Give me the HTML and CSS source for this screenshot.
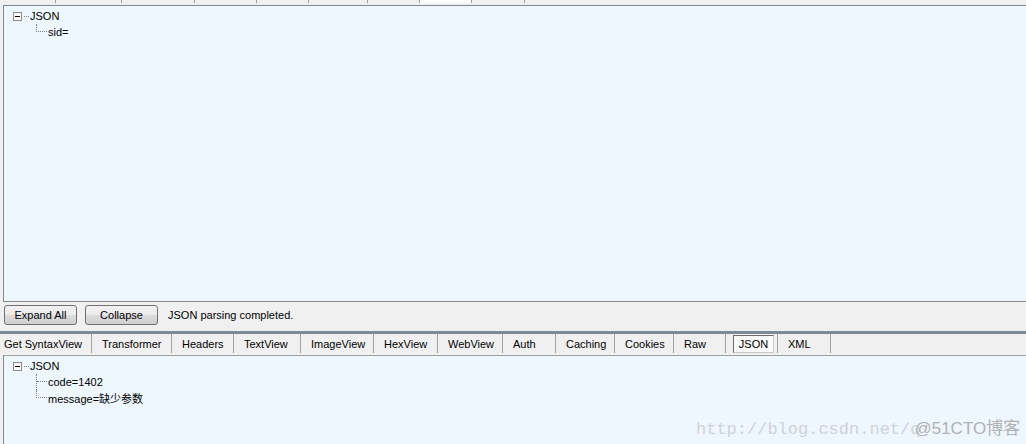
FILE: index.html
```html
<!DOCTYPE html>
<html>
<head>
<meta charset="utf-8">
<link rel="stylesheet" href="styles.css">
</head>
<body>
<div class="topstrip">
  <span class="tick" style="width:56px"></span>
  <span class="tick" style="width:66px"></span>
  <span class="tick" style="width:73px"></span>
  <span class="tick" style="width:62px"></span>
  <span class="tick" style="width:52px"></span>
  <span class="tick" style="width:59px"></span>
  <span class="tick" style="width:52px"></span>
  <span class="tick sel" style="width:52px"></span>
  <span class="tick" style="width:53px"></span>
</div>
<div class="panel top">
  <div class="tree">
    <div class="row root"><span class="box"></span><span class="hdots"></span><span class="label">JSON</span></div>
    <div class="children">
      <div class="row child last"><span class="elbow"></span><span class="label">sid=</span></div>
    </div>
  </div>
</div>
<div class="toolbar">
  <button class="btn btn-expand">Expand All</button>
  <button class="btn btn-collapse">Collapse</button>
  <span class="status">JSON parsing completed.</span>
</div>
<div class="divider"></div>
<div class="tabs">
  <div class="tab first" style="width:92px">Get SyntaxView</div>
  <div class="tab" style="width:80px">Transformer</div>
  <div class="tab" style="width:62px">Headers</div>
  <div class="tab" style="width:67px">TextView</div>
  <div class="tab" style="width:73px">ImageView</div>
  <div class="tab" style="width:64px">HexView</div>
  <div class="tab" style="width:65px">WebView</div>
  <div class="tab" style="width:53px">Auth</div>
  <div class="tab" style="width:59px">Caching</div>
  <div class="tab" style="width:59px">Cookies</div>
  <div class="tab" style="width:52px">Raw</div>
  <div class="tab active" style="width:52px"><span class="activebox">JSON</span></div>
  <div class="tab" style="width:53px">XML</div>
</div>
<div class="panel bottom">
  <div class="tree">
    <div class="row root"><span class="box"></span><span class="hdots"></span><span class="label">JSON</span></div>
    <div class="children">
      <div class="row child"><span class="elbow"></span><span class="label">code=1402</span></div>
      <div class="row child last"><span class="elbow"></span><span class="label">message=缺少参数</span></div>
    </div>
  </div>
  <div class="watermark"><span class="wm-url">http://blog.csdn.net/q</span><span class="wm-brand">@51CTO博客</span></div>
</div>
</body>
</html>
```
FILE: styles.css
```css
html, body {
  margin: 0;
  padding: 0;
}
body {
  width: 1026px;
  height: 444px;
  overflow: hidden;
  background: #f0f0f0;
  font-family: "Liberation Sans", Arial, "Noto Sans CJK SC", sans-serif;
  font-size: 11px;
  color: #000;
  display: flex;
  flex-direction: column;
}
.topstrip {
  height: 5px;
  display: flex;
  background: #f0f0f0;
  flex: none;
}
.tick {
  height: 3px;
  border-right: 1px solid #a0a0a0;
  box-sizing: border-box;
}
.tick.sel {
  background: #fff;
}
.panel {
  margin-left: 3px;
  background: #eef6fe;
  border-left: 1px solid #828790;
  box-sizing: border-box;
  position: relative;
}
.panel.top {
  height: 297px;
  flex: none;
  border-top: 1px solid #828790;
  border-bottom: 1px solid #828790;
  padding-top: 2px;
}
.panel.bottom {
  flex: 1;
  border-top: 1px solid #a0a0a0;
  padding-top: 2px;
}
.tree {
  padding-left: 9px;
}
.row {
  height: 16px;
  display: flex;
  align-items: center;
  white-space: nowrap;
}
.box {
  width: 7px;
  height: 7px;
  border: 1px solid #8a8a8a;
  background: #fff;
  position: relative;
  flex: none;
}
.box::after {
  content: "";
  position: absolute;
  left: 1px;
  top: 3px;
  width: 5px;
  height: 1px;
  background: #000;
}
.hdots {
  width: 5px;
  margin-left: 2px;
  border-top: 1px dotted #808080;
  height: 0;
}
.row.root .label {
  margin-left: 1px;
}
.children {
  margin-left: 23px;
}
.row.child {
  border-left: 1px dotted #808080;
}
.row.child.last {
  border-left: none;
}
.elbow {
  width: 10px;
  height: 8px;
  align-self: flex-start;
  border-bottom: 1px dotted #808080;
  box-sizing: border-box;
  flex: none;
}
.row.child.last .elbow {
  border-left: 1px dotted #808080;
  width: 11px;
}
.row.child .label {
  margin-left: 1px;
}
.toolbar {
  height: 29px;
  flex: none;
  display: flex;
  align-items: flex-start;
  padding-left: 4px;
  padding-top: 3px;
  box-sizing: border-box;
}
.btn {
  height: 20px;
  box-sizing: border-box;
  border: 1px solid #707070;
  border-radius: 3px;
  background: linear-gradient(#f2f2f2 0%, #ebebeb 50%, #dddddd 51%, #cfcfcf 100%);
  font: inherit;
  color: #000;
  padding: 0;
  margin: 0;
}
.btn-expand {
  width: 73px;
}
.btn-collapse {
  width: 73px;
  margin-left: 8px;
}
.status {
  margin-left: 10px;
  line-height: 20px;
}
.divider {
  height: 3px;
  flex: none;
  background: #7a8a99;
}
.tabs {
  height: 21px;
  flex: none;
  display: flex;
  background: #f0f0f0;
}
.tab {
  box-sizing: border-box;
  height: 19px;
  border-right: 1px solid #a0a0a0;
  display: flex;
  align-items: center;
  justify-content: flex-start;
  padding-left: 10px;
  white-space: nowrap;
  flex: none;
}
.tab.first {
  padding-left: 4px;
}
.tab.active {
  padding-left: 7px;
}
.activebox {
  display: flex;
  align-items: center;
  justify-content: center;
  width: 41px;
  height: 18px;
  box-sizing: border-box;
  border: 1px solid #6d6d6d;
  border-right-color: #c8c8c8;
  border-bottom-color: #c8c8c8;
  background: #fafafa;
  margin-top: 1px;
}
.watermark {
  position: absolute;
  left: 692px;
  top: 58px;
  white-space: nowrap;
  display: flex;
  align-items: baseline;
}
.wm-url {
  font-family: "Liberation Mono", monospace;
  font-size: 17px;
  color: #cfd3d7;
}
.wm-brand {
  font-family: "Liberation Sans", "Noto Sans CJK SC", sans-serif;
  font-size: 17px;
  color: #b0b2b4;
  margin-left: -6px;
}
```
